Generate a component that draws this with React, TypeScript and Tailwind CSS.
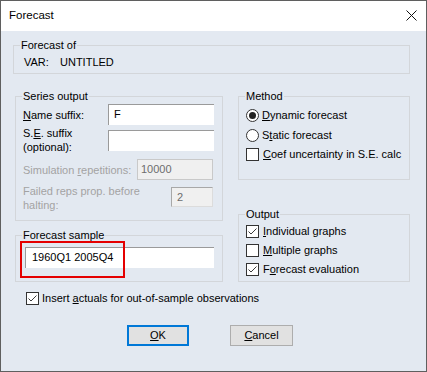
import React from "react";

const U = ({ children }: { children: React.ReactNode }) => (
    <span className="underline decoration-1 underline-offset-[1px]">{children}</span>
);

function CheckBox({ checked }: { checked?: boolean }) {
    return (
        <span className="w-[13px] h-[13px] border border-[#333] bg-white flex items-center justify-center shrink-0">
            {checked && (
                <svg width="11" height="11" viewBox="0 0 11 11">
                    <polyline points="1.5,5.5 4,8 9.5,2.5" fill="none" stroke="#3c3c3c" strokeWidth="1" />
                </svg>
            )}
        </span>
    );
}

function Radio({ checked }: { checked?: boolean }) {
    return (
        <span className="w-[13px] h-[13px] rounded-full border border-[#333] bg-white flex items-center justify-center shrink-0">
            {checked && <span className="w-[7px] h-[7px] rounded-full bg-[#222]"></span>}
        </span>
    );
}

function Group({ title, className, children }: { title: string; className: string; children: React.ReactNode }) {
    return (
        <fieldset className={`border border-[#d3d6da] ${className}`}>
            <legend className="ml-[6px] px-[1px] leading-[13px]">{title}</legend>
            {children}
        </fieldset>
    );
}

export default function App() {
    return (
        <div className="w-[427px] h-[372px] border border-[#5f5f5f] flex flex-col font-['Liberation_Sans',Arial,sans-serif] text-[11px] text-black">

            {/* Title bar */}
            <div className="h-[30px] bg-white flex items-center justify-between pl-[8px] pr-[9px]">
                <span className="text-[11.5px]">Forecast</span>
                <svg width="11" height="11" viewBox="0 0 11 11" className="mt-[-2px]">
                    <path d="M0.5 0.5 L10.5 10.5 M10.5 0.5 L0.5 10.5" stroke="#111" strokeWidth="1" />
                </svg>
            </div>

            {/* Body */}
            <div className="flex-1 bg-[#e3e9f1] flex flex-col">

                <Group title="Forecast of" className="mt-[8px] ml-[12px] w-[397px] h-[35px]">
                    <div className="pt-[3px] pl-[10px] flex leading-[14px]">
                        <span className="w-[36px]">VAR:</span>
                        <span>UNTITLED</span>
                    </div>
                </Group>

                <div className="flex mt-[16px] ml-[14px] gap-[15px]">
                    {/* Left column */}
                    <div className="flex flex-col w-[208px]">
                        <Group title="Series output" className="h-[131px]">
                            <div className="pl-[7px] flex flex-col">
                                <div className="mt-[1px] flex h-[21px]">
                                    <span className="w-[85px] pt-[4px] leading-[14px]"><U>N</U>ame suffix:</span>
                                    <div className="w-[106px] h-[21px] bg-white border-t border-l border-[#9a9a9a] pl-[5px] leading-[19px]">F</div>
                                </div>
                                <div className="mt-[1px] flex h-[28px]">
                                    <span className="w-[85px] leading-[14px]">S.<U>E</U>. suffix<br />(optional):</span>
                                    <div className="mt-[4px] w-[106px] h-[21px] bg-white border-t border-l border-[#9a9a9a]"></div>
                                </div>
                                <div className="mt-[5px] flex h-[21px] items-center text-[#a3a3a3]">
                                    <span className="w-[114px] leading-[14px]">Simulation <U>r</U>epetitions:</span>
                                    <div className="w-[76px] h-[21px] bg-[#f0f0f0] border border-[#c9c9c9] pl-[3px] leading-[19px] text-[#6d6d6d]">10000</div>
                                </div>
                                <div className="mt-[4px] flex h-[28px] text-[#a3a3a3]">
                                    <span className="w-[148px] leading-[14px]">Failed reps prop. before<br />halting:</span>
                                    <div className="mt-[3px] w-[42px] h-[20px] bg-[#f0f0f0] border border-t-[#a8a8a8] border-l-[#a8a8a8] border-r-[#dcdcdc] border-b-[#dcdcdc] pl-[5px] leading-[18px] text-[#6d6d6d]">2</div>
                                </div>
                            </div>
                        </Group>

                        <Group title="Forecast sample" className="mt-[8px] h-[53px]">
                            <div className="pl-[9px] pt-[5px]">
                                <div className="relative w-[189px] h-[21px]">
                                    <div className="w-[189px] h-[21px] bg-white border-t border-l border-[#9a9a9a] pl-[6px] leading-[19px]">1960Q1 2005Q4</div>
                                    <div className="absolute left-[-5px] top-[-6px] w-[105px] h-[37px] border-2 border-[#e50000]"></div>
                                </div>
                            </div>
                        </Group>
                    </div>

                    {/* Right column */}
                    <div className="flex flex-col w-[172px]">
                        <Group title="Method" className="h-[90px]">
                            <div className="pl-[7px] mt-[2px] flex flex-col">
                                <label className="h-[20px] flex items-center gap-[3px]">
                                    <Radio checked />
                                    <span><U>D</U>ynamic forecast</span>
                                </label>
                                <label className="h-[20px] flex items-center gap-[3px]">
                                    <Radio />
                                    <span>S<U>t</U>atic forecast</span>
                                </label>
                                <label className="h-[19px] flex items-center gap-[4px]">
                                    <CheckBox />
                                    <span><U>C</U>oef uncertainty in S.E. calc</span>
                                </label>
                            </div>
                        </Group>

                        <Group title="Output" className="mt-[28px] h-[74px]">
                            <div className="pl-[7px] mt-[1px] flex flex-col">
                                <label className="h-[19px] flex items-center gap-[4px]">
                                    <CheckBox checked />
                                    <span><U>I</U>ndividual graphs</span>
                                </label>
                                <label className="h-[19px] flex items-center gap-[4px]">
                                    <CheckBox />
                                    <span><U>M</U>ultiple graphs</span>
                                </label>
                                <label className="h-[19px] flex items-center gap-[4px]">
                                    <CheckBox checked />
                                    <span>F<U>o</U>recast evaluation</span>
                                </label>
                            </div>
                        </Group>
                    </div>
                </div>

                {/* Insert actuals */}
                <label className="mt-[9px] ml-[25px] h-[15px] flex items-center gap-[3px]">
                    <CheckBox checked />
                    <span>Insert <U>a</U>ctuals for out-of-sample observations</span>
                </label>

                {/* Buttons */}
                <div className="mt-[19px] ml-[126px] flex gap-[41px]">
                    <button className="w-[62px] h-[21px] border-2 border-[#0078d7] bg-[#e1e1e1] leading-[17px]">
                        <U>O</U>K
                    </button>
                    <button className="w-[63px] h-[21px] border border-[#adadad] bg-[#e1e1e1] leading-[19px]">
                        <U>C</U>ancel
                    </button>
                </div>
            </div>
        </div>
    );
}
